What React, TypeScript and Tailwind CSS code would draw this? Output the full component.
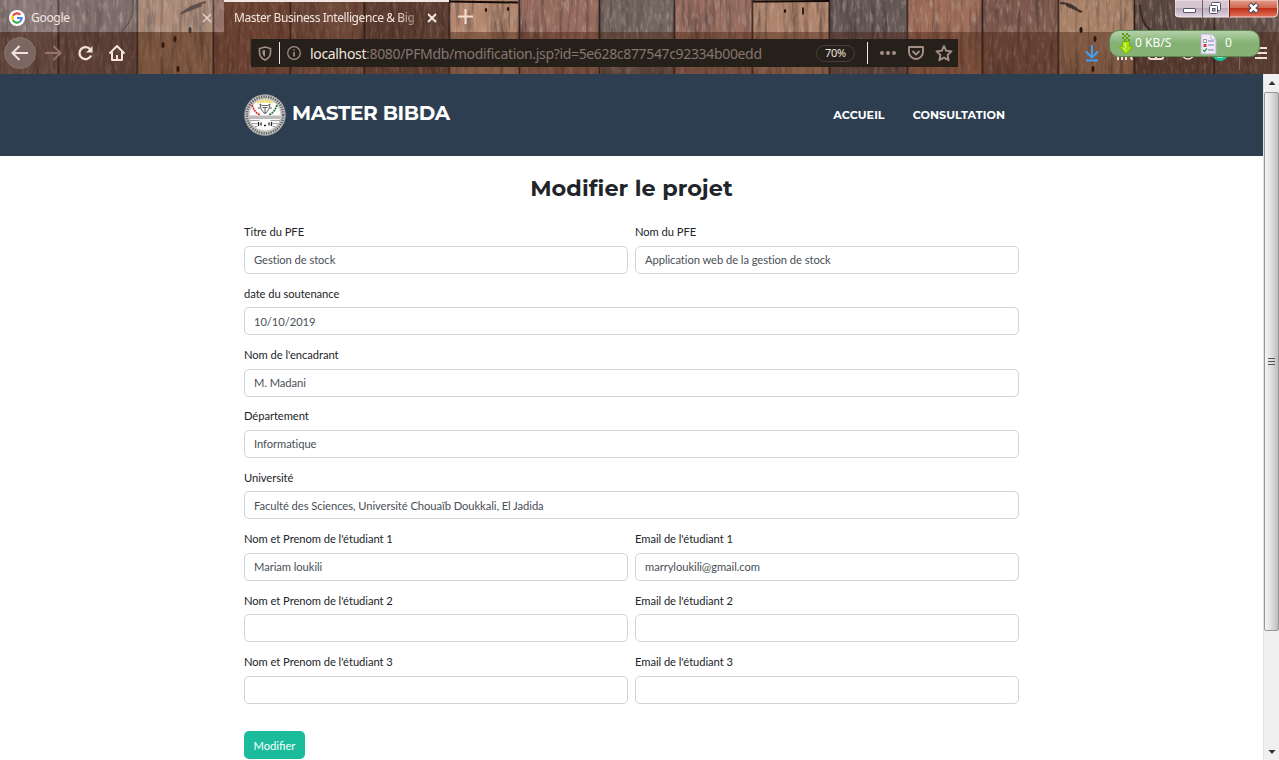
import React from "react";

type Plank = { x: number; w: number; c: string };

const planks: Plank[] = [
  { x: 0, w: 58, c: "#75625f" },
  { x: 58, w: 79, c: "#6c5753" },
  { x: 137, w: 76, c: "#a47d62" },
  { x: 213, w: 77, c: "#85594a" },
  { x: 290, w: 74, c: "#876152" },
  { x: 364, w: 85, c: "#6d524a" },
  { x: 449, w: 70, c: "#b3886f" },
  { x: 519, w: 80, c: "#986d60" },
  { x: 599, w: 75, c: "#736560" },
  { x: 674, w: 78, c: "#996f62" },
  { x: 752, w: 77, c: "#ae846c" },
  { x: 829, w: 78, c: "#665958" },
  { x: 907, w: 75, c: "#9f6f5a" },
  { x: 982, w: 76, c: "#7e5a4e" },
  { x: 1058, w: 76, c: "#a88167" },
  { x: 1134, w: 80, c: "#5c4a42" },
  { x: 1214, w: 65, c: "#68544e" },
];

function Wood() {
  return (
    <svg className="absolute inset-0" width="1279" height="74" viewBox="0 0 1279 74">
      <defs>
        <filter id="grain" x="0" y="0" width="100%" height="100%">
          <feTurbulence type="fractalNoise" baseFrequency="0.2 0.018" numOctaves="4" seed="8" />
          <feColorMatrix values="0 0 0 0 0.03  0 0 0 0 0.02  0 0 0 0 0.02  2.2 0 0 0 -1" />
        </filter>
        <filter id="flecks" x="0" y="0" width="100%" height="100%">
          <feTurbulence type="fractalNoise" baseFrequency="0.3 0.08" numOctaves="3" seed="23" />
          <feColorMatrix values="0 0 0 0 0.6  0 0 0 0 0.45  0 0 0 0 0.38  0 2.4 0 0 -1.2" />
        </filter>
      </defs>
      {planks.map((p) => (
        <rect key={p.x} x={p.x} width={p.w + 1} height="74" fill={p.c} />
      ))}
      <rect width="1279" height="74" filter="url(#grain)" opacity="0.55" />
      <rect width="1279" height="74" filter="url(#flecks)" opacity="0.5" />
      {planks.slice(1).map((p) => (
        <rect key={p.x} x={p.x - 0.5} width="1.8" height="74" fill="#1c1210" opacity="0.75" />
      ))}
      <path d="M449 1.500L518 2.500M753 1.500L829 1" stroke="#120b09" strokeWidth="2" />
      <path d="M181 14q8-8 25-12M184 12l18-7M1060 3q12 0 20 9M1066 5l16 7M1140 5q1 20 12 26" stroke="#2c1f1c" strokeWidth="2" fill="none" opacity="0.8" />
      <path d="M133 0q2 20-12 32" stroke="#392b28" fill="none" />
      <g fill="#21140f">
        <ellipse cx="190" cy="30" rx="1.500" ry="3" />
        <ellipse cx="175" cy="39" rx="1.500" ry="3" />
        <ellipse cx="163" cy="45" rx="1.500" ry="3" />
        <ellipse cx="178" cy="69" rx="1.500" ry="3" />
        <ellipse cx="486" cy="10" rx="1.200" ry="2" />
        <ellipse cx="508" cy="9" rx="1.200" ry="2" />
        <ellipse cx="785" cy="11" rx="1.200" ry="2" />
        <ellipse cx="803" cy="11" rx="1" ry="4" />
        <ellipse cx="1081" cy="30" rx="1.500" ry="3" />
        <ellipse cx="1095" cy="39" rx="1.500" ry="3" />
        <ellipse cx="1093" cy="69" rx="1.500" ry="3" />
      </g>
      <rect x="0" y="0" width="224" height="32" fill="#d8d0d8" opacity="0.2" />
      <rect x="224" y="0" width="225" height="32" fill="#45200f" opacity="0.4" />
      <rect x="0" y="32" width="1279" height="42" fill="#45200f" opacity="0.42" />
      <rect x="224" y="0" width="225" height="2" fill="#f2e7e2" />
    </svg>
  );
}

function GoogleIcon() {
  return (
    <svg width="16" height="16" viewBox="0 0 16 16" className="shrink-0">
      <circle cx="8" cy="8" r="8" fill="#fff" />
      <g fill="none" strokeWidth="2.200">
        <path d="M4 5.700A4.600 4.600 0 0 1 11.300 4.800" stroke="#ea4335" />
        <path d="M4 5.700A4.600 4.600 0 0 0 4 10.300" stroke="#fbbc05" />
        <path d="M4 10.300A4.600 4.600 0 0 0 11 11.500" stroke="#34a853" />
        <path d="M8 8H12.600A4.600 4.600 0 0 1 11 11.500" stroke="#4285f4" />
      </g>
    </svg>
  );
}

function TabBar() {
  return (
    <div className="relative flex h-8 text-[12px] text-[#f3e6e0]">
      <div className="flex w-[224px] items-center pl-[9px] pr-[12px] pt-[3px]">
        <GoogleIcon />
        <span className="ml-[6px] flex-1 tracking-[-0.3px]">Google</span>
        <svg width="10" height="10" viewBox="0 0 10 10" stroke="#e8d8d0" strokeWidth="1.400"><path d="M1 1l8 8M9 1L1 9" /></svg>
      </div>
      <div className="flex w-[225px] items-center pl-[10px] pr-[12px] pt-[3px]">
        <span className="w-[184px] whitespace-nowrap tracking-[-0.42px] [mask-image:linear-gradient(to_right,black_162px,rgba(0,0,0,0.35)_181px)]">
          Master Business Intelligence &amp; Big
        </span>
        <svg className="ml-auto" width="10" height="10" viewBox="0 0 10 10" stroke="#f7ece6" strokeWidth="1.800"><path d="M1 1l8 8M9 1L1 9" /></svg>
      </div>
      <svg className="ml-[9px] mt-[9px]" width="15" height="15" viewBox="0 0 15 15" stroke="#f7ded4" strokeWidth="2"><path d="M7.500 0v15M0 7.500h15" /></svg>
    </div>
  );
}

function NavButtons() {
  return (
    <svg width="135" height="42" viewBox="0 32 135 42" fill="none" stroke="#f4e4dd" strokeWidth="2" className="shrink-0">
      <circle cx="20" cy="53" r="15.500" fill="#7b6761" stroke="#88736c" strokeWidth="1" />
      <path d="M28 53H13M19.500 46L12.500 53L19.500 60" />
      <path d="M45 53H60M53.500 46L60.500 53L53.500 60" stroke="#93736b" />
      <path d="M89.800 49A6 6 0 1 0 91 55.500" strokeWidth="2.300" />
      <path d="M92.500 46v6.500h-6.500z" fill="#f4e4dd" stroke="none" />
      <path d="M109.500 53.500L117 46L124.500 53.500M112 52V60H122V52M117 60V55" strokeLinejoin="round" />
    </svg>
  );
}

function AddressBar() {
  return (
    <div className="mt-[7px] flex h-7 w-[707px] items-center bg-[#26201b]">
      <svg width="36" height="28" viewBox="251 39 36 28" fill="none" stroke="#a58f85" strokeWidth="1.600" className="shrink-0">
        <path d="M265 47l5.500 1.500v4q0 5-5.500 7.500q-5.500-2.500-5.500-7.500v-4z" />
        <path d="M265 50v7q-2.500-1.500-2.500-4v-2.500z" fill="#a58f85" stroke="none" />
        <path d="M279.500 42v22" stroke="#f0e4dd" strokeWidth="1" />
      </svg>
      <svg width="14" height="14" viewBox="0 0 14 14" fill="none" stroke="#a58f85" strokeWidth="1.200" className="shrink-0">
        <circle cx="7" cy="7" r="6.300" /><path d="M7 6v4.500M7 3.400v1.400" strokeWidth="1.600" />
      </svg>
      <span className="ml-[9px] mt-px w-[506px] whitespace-nowrap text-[14px] tracking-[-0.34px] text-[#85766d]">
        <span className="text-[#f0e4dd]">localhost</span>:8080/PFMdb/modification.jsp?id=5e628c877547c92334b00edd
      </span>
      <span className="flex h-[17px] w-[39px] shrink-0 items-center justify-center rounded-full border border-[#484039] pt-px text-[11px] tracking-[-0.2px] text-[#f0e4dd]">70%</span>
      <svg width="103" height="28" viewBox="855 39 103 28" fill="none" stroke="#a58f85" strokeWidth="1.900" className="shrink-0">
        <path d="M867.500 42v22" stroke="#f4ebe5" strokeWidth="1" />
        <g fill="#a58f85" stroke="none"><circle cx="882" cy="53" r="2" /><circle cx="888" cy="53" r="2" /><circle cx="894" cy="53" r="2" /></g>
        <path d="M909 47h14v5a7 7 0 0 1-14 0zM912.500 51l3.500 3.500l3.500-3.500" strokeLinejoin="round" />
        <path d="M944 46l2.200 4.800l5.300.6l-3.900 3.600l1 5.200l-4.600-2.600l-4.600 2.600l1-5.200l-3.900-3.600l5.300-.6z" strokeLinejoin="round" />
      </svg>
    </div>
  );
}

function ToolbarIcons() {
  return (
    <svg className="ml-auto shrink-0" width="202" height="42" viewBox="1077 32 202 42" fill="none" stroke="#f0e0d8" strokeWidth="2">
      <path d="M1092 45v12M1086 51.500l6 6l6-6M1086 60.500h12" stroke="#459cf5" />
      <path d="M1118 46v14M1122 46v14M1126 46v14M1128 47l4 13" />
      <rect x="1149" y="47" width="14" height="12" rx="2" />
      <path d="M1156 47v12" />
      <circle cx="1188" cy="53" r="6" strokeWidth="1.500" />
      <circle cx="1220" cy="53" r="8" fill="#15c39a" stroke="none" />
      <path d="M1217 57h5v-3" strokeWidth="1.500" />
      <path d="M1239.500 43v27" stroke="#806a61" strokeWidth="1" />
      <path d="M1255 48h12M1255 53h12M1255 58h12" />
    </svg>
  );
}

function WindowControls() {
  return (
    <svg className="absolute right-0 top-0" width="104" height="19" viewBox="1175 0 104 19">
      <defs>
        <linearGradient id="glass" x2="0" y2="1"><stop stopColor="#d9c9d2" /><stop offset=".45" stopColor="#d3c5cf" /><stop offset=".5" stopColor="#bcaabd" /><stop offset="1" stopColor="#e0d2e1" /></linearGradient>
        <linearGradient id="red" x2="0" y2="1"><stop stopColor="#e2a08e" /><stop offset=".45" stopColor="#d0674e" /><stop offset=".5" stopColor="#bd301a" /><stop offset="1" stopColor="#e2735a" /></linearGradient>
      </defs>
      <path d="M1175 0h54v17h-50q-4 0-4-4z" fill="url(#glass)" stroke="#f3e8ee" />
      <path d="M1229 0h48.500v13q0 4-4 4H1229z" fill="url(#red)" stroke="#f4d8d0" />
      <path d="M1202.500 0v17" stroke="#6e5c68" />
      <path d="M1229.500 0v17" stroke="#6b1f15" />
      <rect x="1183.500" y="8.500" width="12" height="4" rx=".5" fill="#fff" stroke="#535666" />
      <rect x="1211.500" y="2.500" width="9" height="8" rx="1" fill="#fff" stroke="#535666" />
      <rect x="1209.500" y="5.500" width="8" height="8" rx="1" fill="#fff" stroke="#535666" />
      <rect x="1212.500" y="8.500" width="2.500" height="2.500" fill="#c6b5c4" stroke="#535666" />
      <path d="M1249.500 4l8 8M1257.500 4l-8 8" stroke="#464453" strokeWidth="4.600" />
      <path d="M1250 4.500l7 7M1257 4.500l-7 7" stroke="#fff" strokeWidth="2.600" />
    </svg>
  );
}

function SpeedWidget() {
  return (
    <div className="absolute left-[1109px] top-[30px] flex h-[27px] w-[151px] items-center rounded-[10px] border border-[#5c8750] bg-linear-to-b from-[#b4d2a9] via-[#83b073] to-[#87b277] text-[12px] text-white">
      <svg className="ml-[8px]" width="16" height="24" viewBox="0 0 16 24">
        <path d="M4 1h2v2H4zM8 1h2v2H8zM6 3h2v2H6zM10 3h2v2h-2zM4 5h2v2H4zM8 5h2v2H8zM6 7h2v2H6zM10 7h2v2h-2z" fill="#5c9c0c" />
        <path d="M4.500 9.500h7v5h3.500l-7 8l-7-8h3.500z" fill="#a5de13" stroke="#76b60d" />
        <path d="M6 11h2v5H5l3 4" fill="#d9f56a" />
      </svg>
      <span className="ml-px mt-[-2px] w-[65px] whitespace-nowrap">0 KB/S</span>
      <svg width="17" height="22" viewBox="0 0 17 22">
        <path d="M1 1h10l5 5v15H1z" fill="#eeeaf7" stroke="#b9b0d0" />
        <path d="M11 1v5h5" fill="#fff" stroke="#b9b0d0" />
        <path d="M8 8h6M8 12h6M8 17h6" stroke="#a7a2c5" strokeWidth="1.500" />
        <rect x="3.500" y="6.500" width="3" height="3" fill="#fff" stroke="#9c98ac" />
        <rect x="3.500" y="11" width="3" height="3" fill="#d83a3a" />
        <path d="M3 17l1.500 1.500L7 15.500" stroke="#2fa04a" strokeWidth="1.400" fill="none" />
      </svg>
      <span className="ml-[8px] mt-[-2px]">0</span>
    </div>
  );
}

function Seal() {
  return (
    <svg width="42" height="42" viewBox="0 0 42 42" className="shrink-0" fill="none">
      <circle cx="21" cy="21" r="20.500" fill="#c8c8c6" />
      <circle cx="21" cy="21" r="18.300" stroke="#626261" strokeWidth="2.600" strokeDasharray="1.300 1.100" />
      <circle cx="21" cy="21" r="20.300" stroke="#9c9c9a" strokeWidth=".7" />
      <circle cx="21" cy="21" r="16" fill="#fafafa" stroke="#a7a7a5" strokeWidth=".6" />
      <path d="M12 8Q21 3 30 8l-3 1.500q-6-2-12 0z" fill="#f3dc7c" />
      <path d="M8 11q2 7 8 10" stroke="#d6292c" strokeWidth="1.700" strokeDasharray="2 .7" />
      <path d="M33 11q-2 7-8 10" stroke="#257a3c" strokeWidth="1.700" strokeDasharray="2 .7" />
      <path d="M16 10l2 1.500h6l2-1.500l-1 5l-3 4h-2l-3-4zM18.500 13.500h5M21 14v6" stroke="#555" strokeWidth=".9" />
      <path d="M14 14h2M26 14h2" stroke="#555" />
      <path d="M5.500 21.500h31v3.500h-31z" fill="#bcbcba" />
      <path d="M6 26.500h30M8 29.500h26M11 32.500h20" stroke="#a3a3a1" />
      <path d="M13.500 33q-1-8 7.500-8q8.500 0 7.500 8z" fill="#fff" />
      <path d="M14.500 28v4M17 28.500v3M25 28.500v3M27.500 28v4M20 31.500h2" stroke="#222" strokeWidth="1.300" />
    </svg>
  );
}

function SiteHeader() {
  return (
    <header className="flex h-[82px] shrink-0 items-center bg-[#2c3e50] pl-[244px] pr-[258px] font-['Montserrat','Inter',sans-serif] font-bold text-white">
      <Seal />
      <span className="ml-[6px] mt-[-4px] text-[20px] leading-[30px] tracking-[-0.35px]">MASTER BIBDA</span>
      <nav className="ml-auto flex gap-[28px] text-[11.2px] tracking-[0.04px]">
        <a>ACCUEIL</a>
        <a>CONSULTATION</a>
      </nav>
    </header>
  );
}

type FieldData = { label: string; value: string };

const rows: FieldData[][] = [
  [{ label: "Titre du PFE", value: "Gestion de stock" }, { label: "Nom du PFE", value: "Application web de la gestion de stock" }],
  [{ label: "date du soutenance", value: "10/10/2019" }],
  [{ label: "Nom de l'encadrant", value: "M. Madani" }],
  [{ label: "Département", value: "Informatique" }],
  [{ label: "Université", value: "Faculté des Sciences, Université Chouaïb Doukkali, El Jadida" }],
  [{ label: "Nom et Prenom de l'étudiant 1", value: "Mariam loukili" }, { label: "Email de l'étudiant 1", value: "marryloukili@gmail.com" }],
  [{ label: "Nom et Prenom de l'étudiant 2", value: "" }, { label: "Email de l'étudiant 2", value: "" }],
  [{ label: "Nom et Prenom de l'étudiant 3", value: "" }, { label: "Email de l'étudiant 3", value: "" }],
];

function Field({ label, value }: FieldData) {
  return (
    <div className="min-w-0 flex-1">
      <div className="h-[22.4px] pt-[0.85px] text-[11.2px] leading-[16.8px] text-[#212529]">{label}</div>
      <div className="flex h-[28px] items-center rounded-[5px] border border-[#ced4da] bg-white px-[9px] pt-[1.4px] text-[11.2px] text-[#495057]">{value}</div>
    </div>
  );
}

function ProjectForm() {
  return (
    <main className="flex-1 overflow-hidden bg-white pt-[15px] font-['Lato',sans-serif]">
      <h1 className="text-center font-['Montserrat','Inter',sans-serif] text-[22.4px] font-bold leading-[34px] tracking-[0.08px] text-[#212529]">Modifier le projet</h1>
      <form className="ml-[244px] mt-[18.45px] w-[775px]">
        {rows.map((row) => (
          <div key={row[0].label} className="flex h-[61.4px] gap-[7px] tracking-[-0.06px] [font-variant-ligatures:none]">
            {row.map((f) => <Field key={f.label} {...f} />)}
          </div>
        ))}
        <button type="button" className="mt-[16px] h-[28px] w-[61px] rounded-[5px] bg-[#1abc9c] pt-[4px] text-[11.2px] text-white">Modifier</button>
      </form>
    </main>
  );
}

function Scrollbar() {
  return (
    <div className="flex w-4 shrink-0 flex-col items-center border-l border-[#e3e3e3] bg-[#f0f0f0]">
      <svg width="15" height="18" viewBox="0 0 15 18"><path d="M4.500 11l3.500-4l3.500 4z" fill="#333" /></svg>
      <div className="flex h-[539px] w-[15px] items-center justify-center rounded-[2px] border border-[#969696] bg-linear-to-r from-[#f6f6f6] via-[#dedede] to-[#bcbdc0]">
        <svg width="8" height="9" viewBox="0 0 8 9" stroke="#555"><path d="M0 1.500h7M0 4.500h7M0 7.500h7" /></svg>
      </div>
      <svg className="mt-auto" width="15" height="17" viewBox="0 0 15 17"><path d="M4.500 7h7l-3.500 4z" fill="#333" /></svg>
    </div>
  );
}

export default function App() {
  return (
    <div className="flex h-[760px] w-[1279px] flex-col overflow-hidden bg-white font-['Noto_Sans',sans-serif]">
      <div className="relative h-[74px] shrink-0">
        <Wood />
        <TabBar />
        <div className="relative flex h-[42px]">
          <NavButtons />
          <div className="w-[116px] shrink-0" />
          <AddressBar />
          <ToolbarIcons />
        </div>
        <WindowControls />
        <SpeedWidget />
      </div>
      <div className="flex min-h-0 flex-1">
        <div className="flex min-w-0 flex-1 flex-col">
          <SiteHeader />
          <ProjectForm />
        </div>
        <Scrollbar />
      </div>
    </div>
  );
}
